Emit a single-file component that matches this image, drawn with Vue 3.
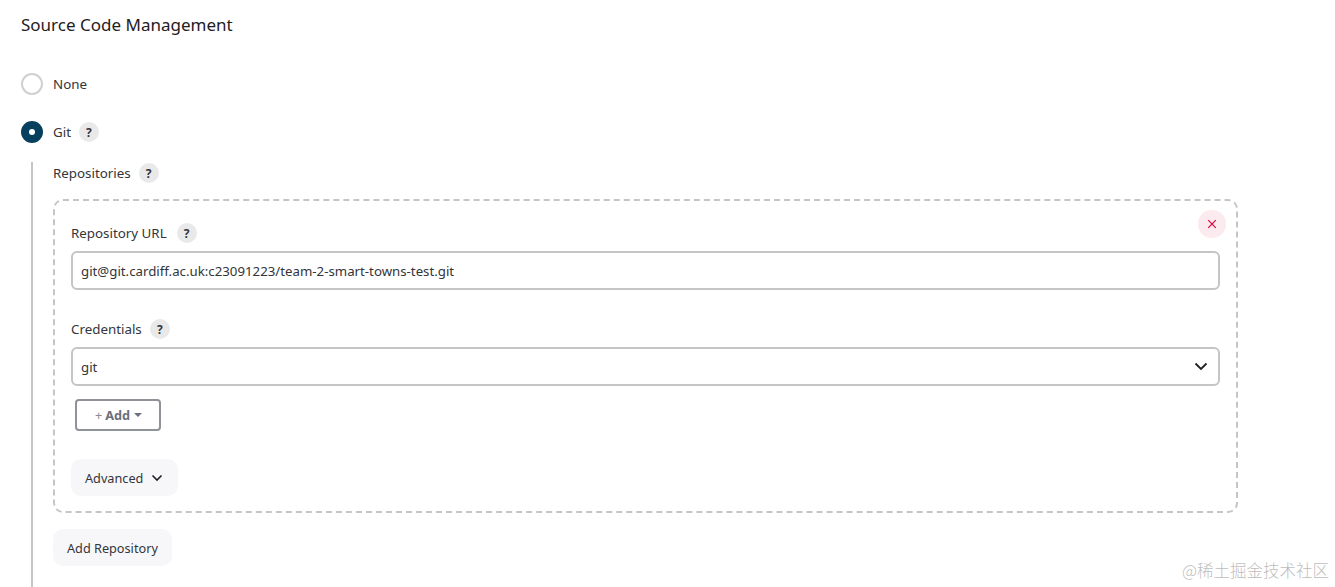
<script setup>
const helpMark = '?'
</script>

<template>
  <div class="page">
    <h2 class="section-title">Source Code Management</h2>

    <div class="radio-row none-row">
      <span class="radio"></span>
      <span class="label-text">None</span>
    </div>

    <div class="radio-row git-row">
      <span class="radio checked"></span>
      <span class="label-text">Git</span>
      <span class="help">{{ helpMark }}</span>
    </div>

    <div class="git-body">
      <div class="label-row repos-label">
        <span class="label-text">Repositories</span>
        <span class="help">{{ helpMark }}</span>
      </div>

      <div class="repo-card">
        <button class="remove-btn">
          <svg width="10" height="10" viewBox="0 0 10 10">
            <path d="M1.2 1.2 L8.8 8.8 M8.8 1.2 L1.2 8.8" stroke="#e6003e" stroke-width="1.2" fill="none" />
          </svg>
        </button>

        <div class="label-row url-label">
          <span class="label-text">Repository URL</span>
          <span class="help">{{ helpMark }}</span>
        </div>
        <div class="field">git@git.cardiff.ac.uk:c23091223/team-2-smart-towns-test.git</div>

        <div class="label-row cred-label">
          <span class="label-text">Credentials</span>
          <span class="help">{{ helpMark }}</span>
        </div>
        <div class="field select">
          <span>git</span>
          <svg width="14" height="9" viewBox="0 0 14 9">
            <path d="M1.5 1.5 L7 7 L12.5 1.5" stroke="#1f2024" stroke-width="1.8" fill="none" />
          </svg>
        </div>

        <button class="add-btn">
          <span class="plus">+</span> Add
          <span class="caret"></span>
        </button>

        <button class="soft-btn advanced">
          Advanced
          <svg width="12" height="8" viewBox="0 0 12 8">
            <path d="M1.5 1.5 L6 6 L10.5 1.5" stroke="#1f2024" stroke-width="1.6" fill="none" />
          </svg>
        </button>
      </div>

      <button class="soft-btn add-repo">Add Repository</button>
    </div>

    <div class="watermark">@稀土掘金技术社区</div>
  </div>
</template>

<style>
html, body {
  margin: 0;
  background: #fff;
}
</style>

<style scoped>
.page {
  position: relative;
  width: 1335px;
  height: 587px;
  overflow: hidden;
  box-sizing: border-box;
  padding: 13px 0 0 21px;
  font-family: "Noto Sans", "Open Sans", sans-serif;
  font-size: 13.35px;
  color: #33353a;
  background: #fff;
}

.section-title {
  margin: 0;
  font-size: 17px;
  line-height: 24px;
  font-weight: 400;
  color: #1f2024;
}

.radio-row {
  display: flex;
  align-items: center;
  height: 24px;
}

.none-row {
  margin-top: 35px;
}

.git-row {
  margin-top: 24px;
}

.radio {
  box-sizing: border-box;
  width: 22px;
  height: 22px;
  border-radius: 50%;
  border: 2px solid #cfd0d0;
  margin-right: 10px;
  display: flex;
  align-items: center;
  justify-content: center;
}

.radio.checked {
  background: #07405f;
  border-color: #07405f;
}

.radio.checked::after {
  content: "";
  width: 6px;
  height: 6px;
  border-radius: 50%;
  background: #fff;
}

.help {
  width: 20px;
  height: 20px;
  border-radius: 50%;
  background: #e9e9ea;
  margin-left: 8px;
  font-size: 12px;
  font-weight: 700;
  color: #33353b;
  display: flex;
  align-items: center;
  justify-content: center;
}

.url-label .help {
  margin-left: 10px;
}

.git-body {
  margin: 18px 0 0 10px;
  padding-left: 20px;
  border-left: 2px solid #c4c5c6;
  height: 425px;
}

.label-row {
  display: flex;
  align-items: center;
  height: 22px;
}

.label-text {
  line-height: 20px;
}

.repos-label {
  margin-top: 0;
}

.repo-card {
  position: relative;
  box-sizing: border-box;
  width: 1185px;
  height: 314px;
  margin-top: 15px;
  padding: 21px 16px 0;
  border: 2px dashed #c3c5c6;
  border-radius: 10px;
}

.remove-btn {
  position: absolute;
  top: 9px;
  right: 10px;
  width: 28px;
  height: 28px;
  padding: 0;
  border: none;
  border-radius: 50%;
  background: #fbeaee;
  display: flex;
  align-items: center;
  justify-content: center;
}

.field {
  box-sizing: border-box;
  width: 1149px;
  height: 39px;
  margin-top: 7px;
  padding: 0 8px;
  border: 2px solid #c3c5c6;
  border-radius: 6px;
  display: flex;
  align-items: center;
  font-size: 13.25px;
  color: #33353a;
}

.select {
  justify-content: space-between;
  padding-right: 10px;
}

.cred-label {
  margin-top: 28px;
}

.add-btn {
  display: flex;
  align-items: center;
  justify-content: center;
  gap: 3px;
  box-sizing: border-box;
  width: 86px;
  height: 32px;
  margin: 13px 0 0 4px;
  padding: 0 0 0 1px;
  border: 2px solid #8f9296;
  border-radius: 4px;
  background: #fff;
  font-family: inherit;
  font-size: 12.7px;
  font-weight: 700;
  color: #6c6f7c;
}

.plus {
  font-weight: 400;
  color: #8a8d93;
}

.caret {
  width: 0;
  height: 0;
  margin-left: 1px;
  border-left: 4px solid transparent;
  border-right: 4px solid transparent;
  border-top: 4px solid #6c6f7c;
}

.soft-btn {
  display: flex;
  align-items: center;
  box-sizing: border-box;
  border: none;
  border-radius: 10px;
  background: #f7f7f9;
  font-family: inherit;
  font-size: 12.7px;
  color: #33353a;
  padding: 0 14px;
}

.advanced {
  gap: 8px;
  width: 107px;
  height: 37px;
  margin-top: 28px;
}

.add-repo {
  width: 119px;
  height: 37px;
  margin-top: 16px;
}

.watermark {
  position: absolute;
  right: 6px;
  bottom: 5px;
  font-family: "Noto Sans CJK SC", sans-serif;
  font-size: 16.5px;
  line-height: 24px;
  color: rgba(120, 120, 120, 0.5);
  font-weight: 300;
}
</style>
